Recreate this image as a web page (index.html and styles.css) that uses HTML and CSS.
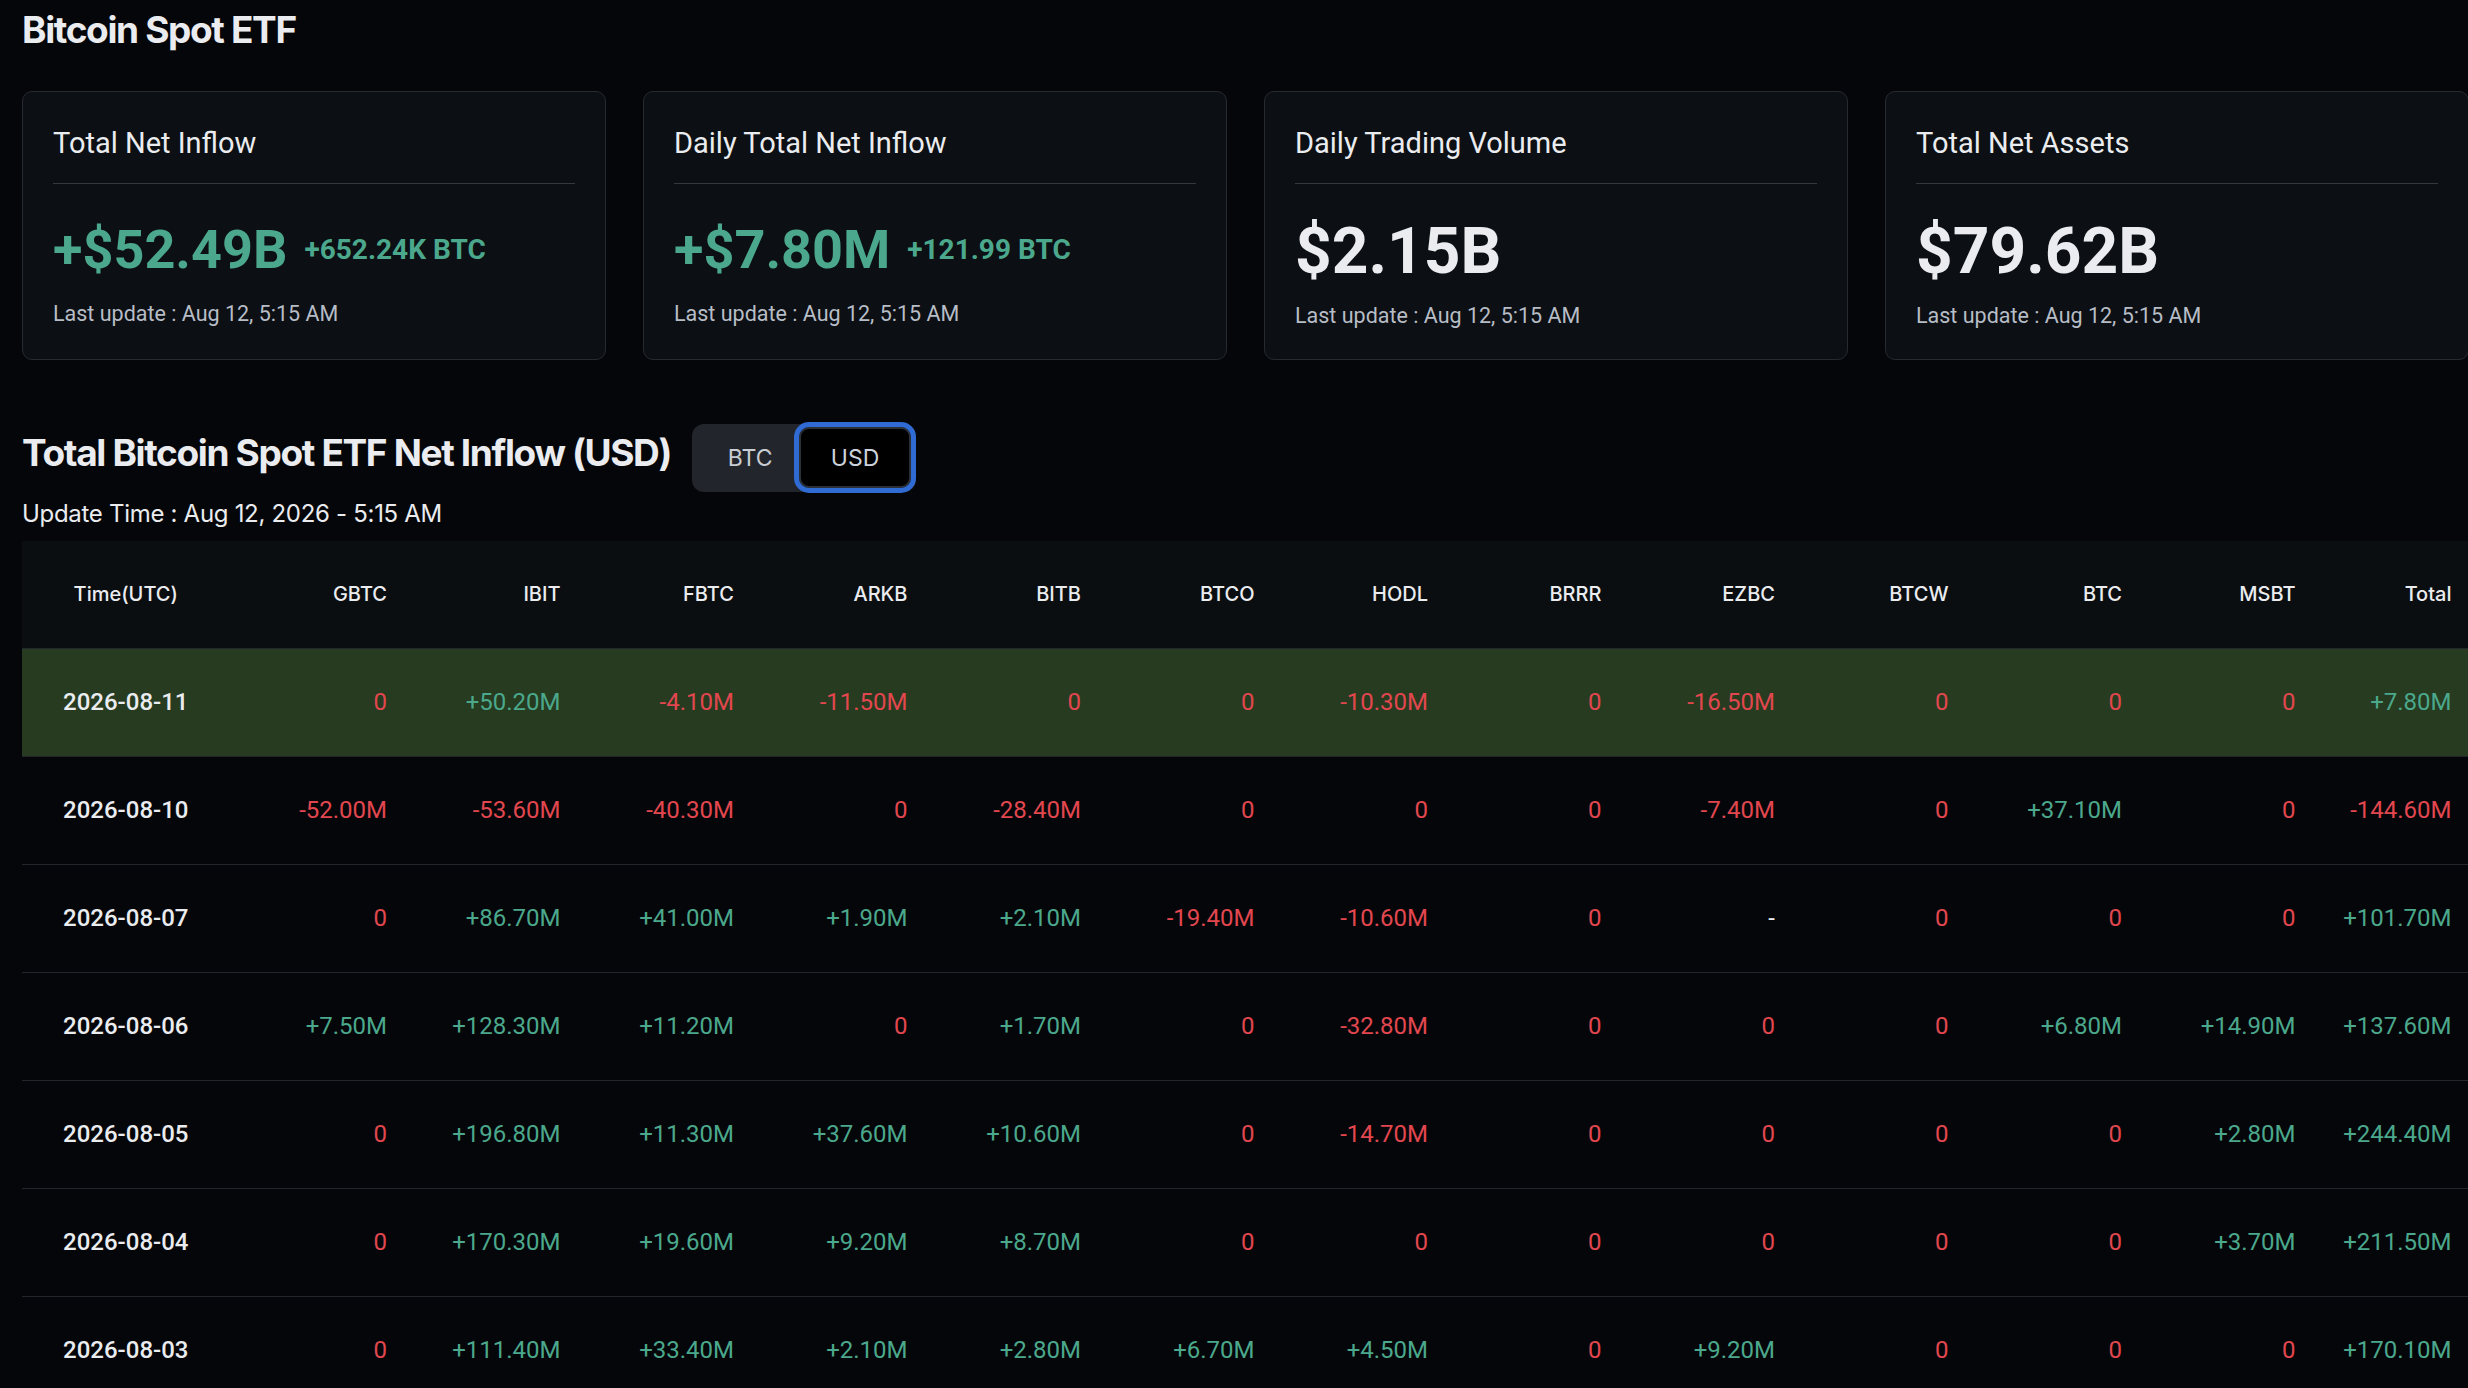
FILE: index.html
```html
<!DOCTYPE html>
<html lang="en">
<head>
<meta charset="utf-8">
<title>Bitcoin Spot ETF</title>
<link rel="stylesheet" href="styles.css">
</head>
<body>
<div class="page">
  <h1 class="h1">Bitcoin Spot ETF</h1>

  <div class="cards">
    <div class="card">
      <div class="card-title">Total Net Inflow</div>
      <div class="divider"></div>
      <div class="value-row">
        <span class="value pos">+$52.49B</span>
        <span class="value-sub pos">+652.24K BTC</span>
      </div>
      <div class="updated">Last update : Aug 12, 5:15 AM</div>
    </div>
    <div class="card">
      <div class="card-title">Daily Total Net Inflow</div>
      <div class="divider"></div>
      <div class="value-row">
        <span class="value pos">+$7.80M</span>
        <span class="value-sub pos">+121.99 BTC</span>
      </div>
      <div class="updated">Last update : Aug 12, 5:15 AM</div>
    </div>
    <div class="card">
      <div class="card-title">Daily Trading Volume</div>
      <div class="divider"></div>
      <div class="value-row big">
        <span class="value big">$2.15B</span>
      </div>
      <div class="updated big">Last update : Aug 12, 5:15 AM</div>
    </div>
    <div class="card">
      <div class="card-title">Total Net Assets</div>
      <div class="divider"></div>
      <div class="value-row big">
        <span class="value big">$79.62B</span>
      </div>
      <div class="updated big">Last update : Aug 12, 5:15 AM</div>
    </div>
  </div>

  <div class="section-head">
    <h2 class="h2">Total Bitcoin Spot ETF Net Inflow (USD)</h2>
    <div class="toggle">
      <span class="opt">BTC</span>
      <span class="opt active">USD</span>
    </div>
  </div>
  <div class="update-time">Update Time : Aug 12, 2026 - 5:15 AM</div>

  <div class="table">
    <div class="trow thead">
      <div class="cell time">Time(UTC)</div>
      <div class="cell">GBTC</div>
      <div class="cell">IBIT</div>
      <div class="cell">FBTC</div>
      <div class="cell">ARKB</div>
      <div class="cell">BITB</div>
      <div class="cell">BTCO</div>
      <div class="cell">HODL</div>
      <div class="cell">BRRR</div>
      <div class="cell">EZBC</div>
      <div class="cell">BTCW</div>
      <div class="cell">BTC</div>
      <div class="cell">MSBT</div>
      <div class="cell">Total</div>
    </div>

    <div class="trow tbody hl">
      <div class="cell time date">2026-08-11</div>
      <div class="cell neg">0</div>
      <div class="cell pos">+50.20M</div>
      <div class="cell neg">-4.10M</div>
      <div class="cell neg">-11.50M</div>
      <div class="cell neg">0</div>
      <div class="cell neg">0</div>
      <div class="cell neg">-10.30M</div>
      <div class="cell neg">0</div>
      <div class="cell neg">-16.50M</div>
      <div class="cell neg">0</div>
      <div class="cell neg">0</div>
      <div class="cell neg">0</div>
      <div class="cell pos">+7.80M</div>
    </div>

    <div class="trow tbody">
      <div class="cell time date">2026-08-10</div>
      <div class="cell neg">-52.00M</div>
      <div class="cell neg">-53.60M</div>
      <div class="cell neg">-40.30M</div>
      <div class="cell neg">0</div>
      <div class="cell neg">-28.40M</div>
      <div class="cell neg">0</div>
      <div class="cell neg">0</div>
      <div class="cell neg">0</div>
      <div class="cell neg">-7.40M</div>
      <div class="cell neg">0</div>
      <div class="cell pos">+37.10M</div>
      <div class="cell neg">0</div>
      <div class="cell neg">-144.60M</div>
    </div>

    <div class="trow tbody">
      <div class="cell time date">2026-08-07</div>
      <div class="cell neg">0</div>
      <div class="cell pos">+86.70M</div>
      <div class="cell pos">+41.00M</div>
      <div class="cell pos">+1.90M</div>
      <div class="cell pos">+2.10M</div>
      <div class="cell neg">-19.40M</div>
      <div class="cell neg">-10.60M</div>
      <div class="cell neg">0</div>
      <div class="cell">-</div>
      <div class="cell neg">0</div>
      <div class="cell neg">0</div>
      <div class="cell neg">0</div>
      <div class="cell pos">+101.70M</div>
    </div>

    <div class="trow tbody">
      <div class="cell time date">2026-08-06</div>
      <div class="cell pos">+7.50M</div>
      <div class="cell pos">+128.30M</div>
      <div class="cell pos">+11.20M</div>
      <div class="cell neg">0</div>
      <div class="cell pos">+1.70M</div>
      <div class="cell neg">0</div>
      <div class="cell neg">-32.80M</div>
      <div class="cell neg">0</div>
      <div class="cell neg">0</div>
      <div class="cell neg">0</div>
      <div class="cell pos">+6.80M</div>
      <div class="cell pos">+14.90M</div>
      <div class="cell pos">+137.60M</div>
    </div>

    <div class="trow tbody">
      <div class="cell time date">2026-08-05</div>
      <div class="cell neg">0</div>
      <div class="cell pos">+196.80M</div>
      <div class="cell pos">+11.30M</div>
      <div class="cell pos">+37.60M</div>
      <div class="cell pos">+10.60M</div>
      <div class="cell neg">0</div>
      <div class="cell neg">-14.70M</div>
      <div class="cell neg">0</div>
      <div class="cell neg">0</div>
      <div class="cell neg">0</div>
      <div class="cell neg">0</div>
      <div class="cell pos">+2.80M</div>
      <div class="cell pos">+244.40M</div>
    </div>

    <div class="trow tbody">
      <div class="cell time date">2026-08-04</div>
      <div class="cell neg">0</div>
      <div class="cell pos">+170.30M</div>
      <div class="cell pos">+19.60M</div>
      <div class="cell pos">+9.20M</div>
      <div class="cell pos">+8.70M</div>
      <div class="cell neg">0</div>
      <div class="cell neg">0</div>
      <div class="cell neg">0</div>
      <div class="cell neg">0</div>
      <div class="cell neg">0</div>
      <div class="cell neg">0</div>
      <div class="cell pos">+3.70M</div>
      <div class="cell pos">+211.50M</div>
    </div>

    <div class="trow tbody">
      <div class="cell time date">2026-08-03</div>
      <div class="cell neg">0</div>
      <div class="cell pos">+111.40M</div>
      <div class="cell pos">+33.40M</div>
      <div class="cell pos">+2.10M</div>
      <div class="cell pos">+2.80M</div>
      <div class="cell pos">+6.70M</div>
      <div class="cell pos">+4.50M</div>
      <div class="cell neg">0</div>
      <div class="cell pos">+9.20M</div>
      <div class="cell neg">0</div>
      <div class="cell neg">0</div>
      <div class="cell neg">0</div>
      <div class="cell pos">+170.10M</div>
    </div>
  </div>
</div>
</body>
</html>
```

FILE: styles.css
```css
html, body {
  margin: 0;
  padding: 0;
  background: #050609;
  overflow: hidden;
}

body {
  font-family: Roboto, "Noto Sans", "Liberation Sans", sans-serif;
  color: #eaecef;
}

.page {
  padding: 8px 0 0 22px;
  width: 2446px;
}

.h1,
.h2 {
  margin: 0;
  font-family: Inter, "Noto Sans", sans-serif;
  font-weight: 700;
  font-size: 37px;
  line-height: 1.21;
  letter-spacing: -1.35px;
  color: #eaecef;
}

.cards {
  display: flex;
  gap: 37px;
  margin-top: 38px;
}

.card {
  flex: 0 0 584px;
  height: 269px;
  box-sizing: border-box;
  border: 1px solid #262a31;
  border-radius: 10px;
  background: #0c0f13;
  padding: 31px 30px 0;
}

.card-title {
  font-size: 29px;
  line-height: 40px;
  color: #eaecef;
}

.divider {
  height: 1px;
  background: #34383f;
  margin-top: 20px;
}

.value-row {
  display: flex;
  align-items: center;
  gap: 17px;
  height: 64px;
  margin-top: 34px;
}

.value-row.big {
  height: 76px;
  margin-top: 30px;
}

.value {
  font-weight: 700;
  font-size: 54px;
  line-height: 64px;
}

.value.big {
  font-size: 64px;
  line-height: 76px;
  color: #eaecef;
}

.value-sub {
  font-weight: 700;
  font-size: 28px;
  line-height: 36px;
}

.updated {
  font-size: 21.5px;
  line-height: 28px;
  color: #b7bdc6;
  margin-top: 18px;
}

.updated.big {
  margin-top: 12px;
}

.pos {
  color: #4ba88c;
}

.neg {
  color: #e2474f;
}

.section-head {
  display: flex;
  align-items: center;
  gap: 21px;
  height: 68px;
  margin-top: 64px;
}

.h2 {
  margin-bottom: 9px;
}

.toggle {
  display: flex;
  align-items: center;
  height: 68px;
  background: #22252b;
  border-radius: 12px;
  font-family: Inter, "Noto Sans", sans-serif;
  font-size: 23px;
  color: #c9cdd3;
}

.opt {
  width: 102px;
  box-sizing: border-box;
  padding-left: 14px;
  text-align: center;
}

.opt.active {
  width: 122px;
  height: 71px;
  padding-left: 0;
  display: flex;
  align-items: center;
  justify-content: center;
  border: 5px solid #2f6bd2;
  border-radius: 15px;
  background: #000;
  box-shadow: inset 0 0 0 2px #2b2f36;
  color: #cdd3db;
}

.update-time {
  font-family: Inter, "Noto Sans", sans-serif;
  font-size: 24px;
  line-height: 29px;
  letter-spacing: -0.3px;
  margin-top: 7px;
  color: #eaecef;
}

.table {
  margin-top: 13px;
}

.trow {
  display: grid;
  grid-template-columns: 207.5px repeat(12, 173.5px) 156px;
  height: 108px;
  box-sizing: border-box;
  border-bottom: 1px solid #23272d;
  align-items: center;
}

.thead {
  background: #0b0e11;
  font-family: Inter, "Noto Sans", sans-serif;
  font-weight: 500;
  font-size: 20px;
  color: #eaecef;
}

.tbody {
  font-size: 24px;
}

.tbody.hl {
  background: #263b1f;
}

.cell {
  text-align: right;
  padding-right: 16px;
  white-space: nowrap;
}

.cell.time {
  text-align: center;
  padding-right: 0;
}

.date {
  font-weight: 500;
  color: #eaecef;
}
```
